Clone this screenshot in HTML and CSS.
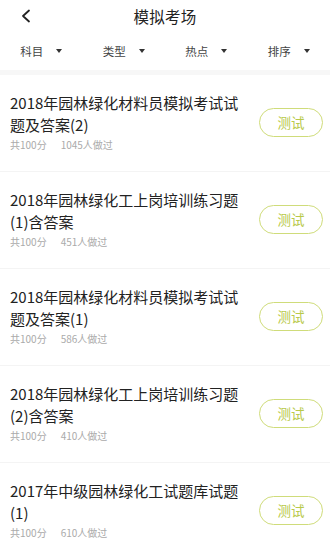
FILE: index.html
```html
<!DOCTYPE html>
<html lang="zh-CN">
<head>
<meta charset="utf-8">
<link rel="stylesheet" href="styles.css">
</head>
<body>
<div class="page">
  <div class="header">
    <svg class="back" width="12" height="14" viewBox="0 0 12 14"><path d="M9 1.5 L3 7 L9 12.5" fill="none" stroke="#222" stroke-width="1.8" stroke-linecap="round" stroke-linejoin="round"/></svg>
    <div class="title">模拟考场</div>
  </div>
  <div class="filters">
    <div class="filter"><span>科目</span><i class="tri"></i></div>
    <div class="filter"><span>类型</span><i class="tri"></i></div>
    <div class="filter"><span>热点</span><i class="tri"></i></div>
    <div class="filter"><span>排序</span><i class="tri"></i></div>
  </div>
  <div class="list">
    <div class="item">
      <div class="info">
        <div class="name">2018年园林绿化材料员模拟考试试题及答案(2)</div>
        <div class="meta"><span>共100分</span><span>1045人做过</span></div>
      </div>
      <div class="btn">测试</div>
    </div>
    <div class="item">
      <div class="info">
        <div class="name">2018年园林绿化工上岗培训练习题(1)含答案</div>
        <div class="meta"><span>共100分</span><span>451人做过</span></div>
      </div>
      <div class="btn">测试</div>
    </div>
    <div class="item">
      <div class="info">
        <div class="name">2018年园林绿化材料员模拟考试试题及答案(1)</div>
        <div class="meta"><span>共100分</span><span>586人做过</span></div>
      </div>
      <div class="btn">测试</div>
    </div>
    <div class="item">
      <div class="info">
        <div class="name">2018年园林绿化工上岗培训练习题(2)含答案</div>
        <div class="meta"><span>共100分</span><span>410人做过</span></div>
      </div>
      <div class="btn">测试</div>
    </div>
    <div class="item">
      <div class="info">
        <div class="name">2017年中级园林绿化工试题库试题(1)</div>
        <div class="meta"><span>共100分</span><span>610人做过</span></div>
      </div>
      <div class="btn">测试</div>
    </div>
  </div>
</div>
</body>
</html>
```
FILE: styles.css
```css
* { box-sizing: border-box; }
html, body { margin: 0; padding: 0; background: #fff; }
body {
  font-family: "Noto Sans CJK SC", "Noto Sans", sans-serif;
  color: #222;
  width: 330px;
  height: 550px;
  overflow: hidden;
}
.header {
  position: relative;
  height: 32px;
  display: flex;
  align-items: center;
  justify-content: center;
}
.back {
  position: absolute;
  left: 20px;
  top: 9px;
}
.title {
  font-size: 15.5px;
  line-height: 32px;
  color: #222;
  letter-spacing: 0.3px;
}
.filters {
  display: flex;
  border-bottom: 5px solid #f7f7f7;
  height: 43px;
}
.filter {
  flex: 1;
  display: flex;
  align-items: center;
  justify-content: center;
  font-size: 11.5px;
  color: #444;
}
.filter span { line-height: 38px; }
.tri {
  width: 0;
  height: 0;
  margin-left: 13px;
  border-left: 3.5px solid transparent;
  border-right: 3.5px solid transparent;
  border-top: 4px solid #333;
}
.item {
  display: flex;
  align-items: center;
  padding: 17px 7px 19px 10px;
  border-bottom: 1.5px solid #f4f4f4;
}
.info { flex: 1; min-width: 0; }
.name {
  font-size: 15px;
  line-height: 22px;
  color: #222;
  width: 238px;
}
.meta {
  margin-top: 2px;
  font-size: 10px;
  line-height: 14px;
  color: #aaa;
  display: flex;
  gap: 14px;
}
.btn {
  width: 64px;
  height: 29px;
  border: 1.5px solid #cfdc7a;
  border-radius: 15px;
  color: #b8c94a;
  font-size: 13.5px;
  display: flex;
  align-items: center;
  justify-content: center;
  flex-shrink: 0;
}
```
